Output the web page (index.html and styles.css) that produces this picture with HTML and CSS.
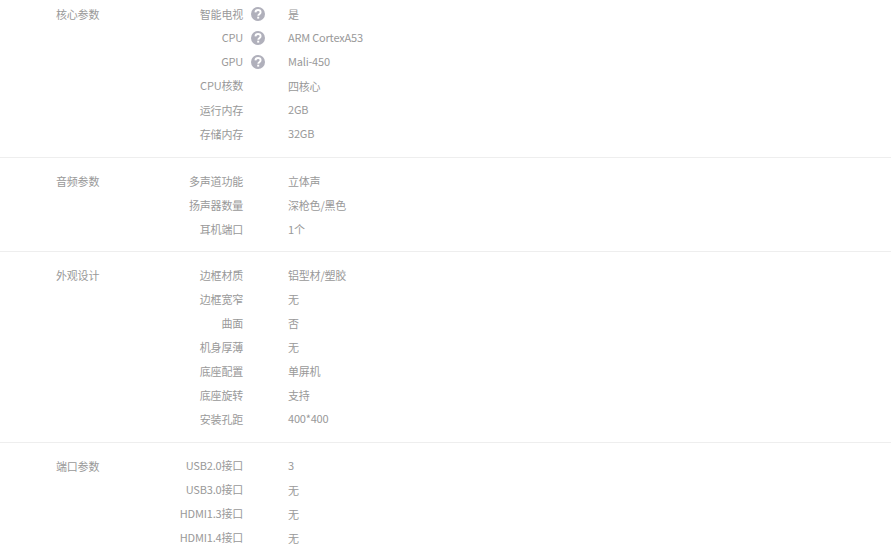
FILE: index.html
```html
<!DOCTYPE html>
<html lang="zh-CN">
<head>
<meta charset="utf-8">
<title>参数</title>
<link rel="stylesheet" href="styles.css">
</head>
<body>
<div class="specs">
  <section class="group">
    <h3 class="group-title">核心参数</h3>
    <dl class="rows">
      <div class="row"><dt class="key">智能电视</dt><dd class="hint"><svg class="help" viewBox="0 0 14 14"><circle cx="7" cy="7" r="7" fill="#b0b0bb"/><path d="M4.4 5.4C4.5 3.9 5.6 3 7 3c1.5 0 2.6.9 2.6 2.2 0 1-.6 1.5-1.3 2-.7.5-1 .8-1 1.6" fill="none" stroke="#fff" stroke-width="1.9"/><rect x="6.2" y="9.7" width="2" height="1.9" fill="#fff"/></svg></dd><dd class="val">是</dd></div>
      <div class="row"><dt class="key latin">CPU</dt><dd class="hint"><svg class="help" viewBox="0 0 14 14"><circle cx="7" cy="7" r="7" fill="#b0b0bb"/><path d="M4.4 5.4C4.5 3.9 5.6 3 7 3c1.5 0 2.6.9 2.6 2.2 0 1-.6 1.5-1.3 2-.7.5-1 .8-1 1.6" fill="none" stroke="#fff" stroke-width="1.9"/><rect x="6.2" y="9.7" width="2" height="1.9" fill="#fff"/></svg></dd><dd class="val latin">ARM CortexA53</dd></div>
      <div class="row"><dt class="key latin">GPU</dt><dd class="hint"><svg class="help" viewBox="0 0 14 14"><circle cx="7" cy="7" r="7" fill="#b0b0bb"/><path d="M4.4 5.4C4.5 3.9 5.6 3 7 3c1.5 0 2.6.9 2.6 2.2 0 1-.6 1.5-1.3 2-.7.5-1 .8-1 1.6" fill="none" stroke="#fff" stroke-width="1.9"/><rect x="6.2" y="9.7" width="2" height="1.9" fill="#fff"/></svg></dd><dd class="val latin">Mali-450</dd></div>
      <div class="row"><dt class="key latin">CPU核数</dt><dd class="hint"></dd><dd class="val">四核心</dd></div>
      <div class="row"><dt class="key">运行内存</dt><dd class="hint"></dd><dd class="val latin">2GB</dd></div>
      <div class="row"><dt class="key">存储内存</dt><dd class="hint"></dd><dd class="val latin">32GB</dd></div>
    </dl>
  </section>
  <section class="group">
    <h3 class="group-title">音频参数</h3>
    <dl class="rows">
      <div class="row"><dt class="key">多声道功能</dt><dd class="hint"></dd><dd class="val">立体声</dd></div>
      <div class="row"><dt class="key">扬声器数量</dt><dd class="hint"></dd><dd class="val">深枪色/黑色</dd></div>
      <div class="row"><dt class="key">耳机端口</dt><dd class="hint"></dd><dd class="val">1个</dd></div>
    </dl>
  </section>
  <section class="group">
    <h3 class="group-title">外观设计</h3>
    <dl class="rows">
      <div class="row"><dt class="key">边框材质</dt><dd class="hint"></dd><dd class="val">铝型材/塑胶</dd></div>
      <div class="row"><dt class="key">边框宽窄</dt><dd class="hint"></dd><dd class="val">无</dd></div>
      <div class="row"><dt class="key">曲面</dt><dd class="hint"></dd><dd class="val">否</dd></div>
      <div class="row"><dt class="key">机身厚薄</dt><dd class="hint"></dd><dd class="val">无</dd></div>
      <div class="row"><dt class="key">底座配置</dt><dd class="hint"></dd><dd class="val">单屏机</dd></div>
      <div class="row"><dt class="key">底座旋转</dt><dd class="hint"></dd><dd class="val">支持</dd></div>
      <div class="row"><dt class="key">安装孔距</dt><dd class="hint"></dd><dd class="val latin">400*400</dd></div>
    </dl>
  </section>
  <section class="group">
    <h3 class="group-title">端口参数</h3>
    <dl class="rows">
      <div class="row"><dt class="key latin">USB2.0接口</dt><dd class="hint"></dd><dd class="val latin">3</dd></div>
      <div class="row"><dt class="key latin">USB3.0接口</dt><dd class="hint"></dd><dd class="val">无</dd></div>
      <div class="row"><dt class="key latin">HDMI1.3接口</dt><dd class="hint"></dd><dd class="val">无</dd></div>
      <div class="row"><dt class="key latin">HDMI1.4接口</dt><dd class="hint"></dd><dd class="val">无</dd></div>
    </dl>
  </section>
</div>
</body>
</html>
```
FILE: styles.css
```css
html, body {
  margin: 0;
  padding: 0;
  height: 550px;
  overflow: hidden;
  background: #fff;
}
body {
  font-family: "Noto Sans CJK SC", sans-serif;
  font-size: 11px;
  line-height: 24px;
  letter-spacing: -0.2px;
  color: #999;
}
.specs {
  width: 891px;
  margin-top: -8.9px;
}
.group {
  display: flex;
  padding: 11px 0 10.5px 56px;
  border-bottom: 1px solid #eee;
}
.group:last-child {
  border-bottom: 0;
}
.group-title {
  width: 97px;
  margin: 0;
  font-size: 11px;
  font-weight: 400;
  line-height: 24px;
  flex: none;
}
.rows {
  margin: 0;
}
.row {
  display: flex;
  align-items: flex-start;
  height: 24px;
}
.key {
  width: 90px;
  text-align: right;
}
.latin {
  line-height: 22px;
}
.hint {
  width: 45px;
  height: 24px;
  margin: 0;
  padding-left: 8px;
  box-sizing: border-box;
  display: flex;
  align-items: center;
}
.help {
  width: 14px;
  height: 14px;
  display: block;
}
.val {
  margin: 0;
}
```
